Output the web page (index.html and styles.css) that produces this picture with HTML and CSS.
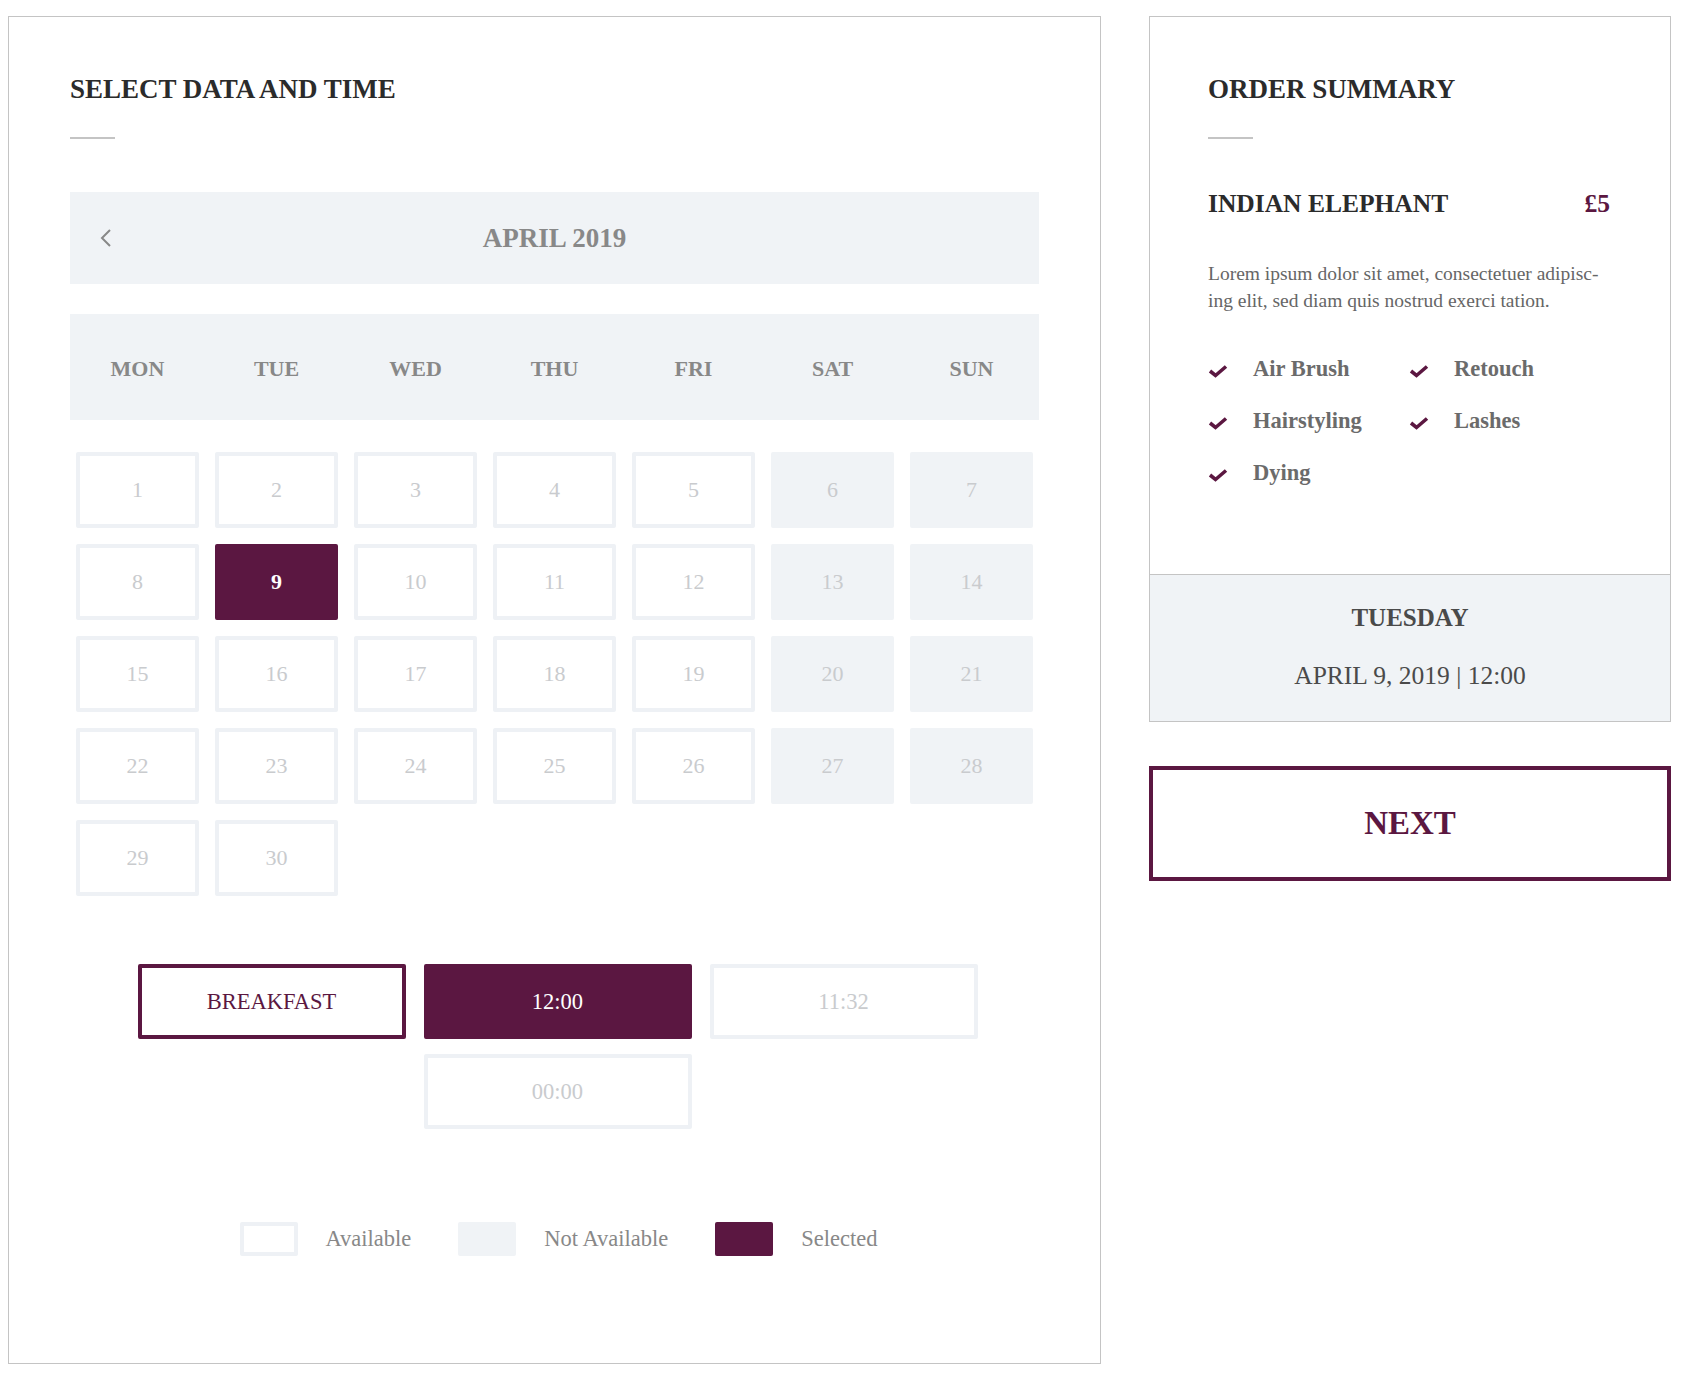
FILE: index.html
```html
<!doctype html>
<html lang="en">
<head>
<meta charset="utf-8">
<meta name="viewport" content="width=device-width, initial-scale=1">
<title>Select data and time</title>
<link rel="stylesheet" href="styles.css">
</head>
<body>

<div class="page">

	<section class="booking">

		<h2 class="title">SELECT DATA AND TIME</h2>
		<div class="rule"></div>

		<div class="month">
			<svg class="prev" viewBox="0 0 12 20"><polyline points="10,2 2,10 10,18" /></svg>
			<span>APRIL 2019</span>
		</div>

		<div class="weekdays">
			<span>MON</span><span>TUE</span><span>WED</span><span>THU</span><span>FRI</span><span>SAT</span><span>SUN</span>
		</div>

		<div class="days">
			<span class="day">1</span><span class="day">2</span><span class="day">3</span><span class="day">4</span><span class="day">5</span><span class="day off">6</span><span class="day off">7</span>
			<span class="day">8</span><span class="day on">9</span><span class="day">10</span><span class="day">11</span><span class="day">12</span><span class="day off">13</span><span class="day off">14</span>
			<span class="day">15</span><span class="day">16</span><span class="day">17</span><span class="day">18</span><span class="day">19</span><span class="day off">20</span><span class="day off">21</span>
			<span class="day">22</span><span class="day">23</span><span class="day">24</span><span class="day">25</span><span class="day">26</span><span class="day off">27</span><span class="day off">28</span>
			<span class="day">29</span><span class="day">30</span>
		</div>

		<div class="slots">
			<span class="slot meal">BREAKFAST</span>
			<span class="slot on">12:00</span>
			<span class="slot">11:32</span>
			<span class="slot">00:00</span>
		</div>

		<div class="legend">
			<span class="key"><i class="swatch free"></i>Available</span>
			<span class="key"><i class="swatch busy"></i>Not Available</span>
			<span class="key"><i class="swatch picked"></i>Selected</span>
		</div>

	</section>

	<aside class="side">

		<div class="summary">

			<div class="summary-top">

				<h2 class="title">ORDER SUMMARY</h2>
				<div class="rule"></div>

				<div class="item">
					<span>INDIAN ELEPHANT</span>
					<span class="price">£5</span>
				</div>

				<p class="desc">Lorem ipsum dolor sit amet, consectetuer adipisc-<br>ing elit, sed diam quis nostrud exerci tation.</p>

				<ul class="features">
					<li><svg class="tick" viewBox="0 0 20 14"><path d="M2 7 L7.5 11.5 L18 2.5" /></svg>Air Brush</li>
					<li><svg class="tick" viewBox="0 0 20 14"><path d="M2 7 L7.5 11.5 L18 2.5" /></svg>Retouch</li>
					<li><svg class="tick" viewBox="0 0 20 14"><path d="M2 7 L7.5 11.5 L18 2.5" /></svg>Hairstyling</li>
					<li><svg class="tick" viewBox="0 0 20 14"><path d="M2 7 L7.5 11.5 L18 2.5" /></svg>Lashes</li>
					<li><svg class="tick" viewBox="0 0 20 14"><path d="M2 7 L7.5 11.5 L18 2.5" /></svg>Dying</li>
				</ul>

			</div>

			<div class="summary-date">
				<div class="weekday">TUESDAY</div>
				<div class="when">APRIL 9, 2019 | 12:00</div>
			</div>

		</div>

		<button class="next">NEXT</button>

	</aside>

</div>

</body>
</html>
```

FILE: styles.css
```css
body { margin: 0; font-family: "Liberation Serif", "Times New Roman", serif; color: #2b2b2b; background: #fff; }

.page { display: flex; align-items: flex-start; gap: 48px; padding: 16px 0 0 8px; }

.title { margin: 0; font-size: 27px; line-height: 26px; font-weight: bold; color: #2b2b2b; }
.rule { width: 45px; height: 2px; margin-top: 35px; background: #c4c4c4; }

/* calendar side */
.booking { width: 1093px; box-sizing: border-box; border: 1px solid #c4c4c4; padding: 59px 61px 107px; }

.month { display: grid; grid-template-columns: 1fr auto 1fr; align-items: center; height: 92px; margin-top: 53px; background: #f0f3f6; }
.month span { font-size: 27px; font-weight: bold; color: #888; }
.prev { width: 12px; height: 20px; margin-left: 30px; fill: none; stroke: #888; stroke-width: 2; }

.weekdays, .days { display: grid; grid-template-columns: repeat(7, 1fr); column-gap: 16px; padding: 0 6px; }
.weekdays { align-items: center; height: 106px; box-sizing: border-box; padding-top: 4px; margin-top: 30px; background: #f0f3f6; text-align: center; font-size: 22px; font-weight: bold; color: #888; }
.days { row-gap: 16px; margin-top: 32px; }

.day { display: flex; align-items: center; justify-content: center; height: 76px; box-sizing: border-box; border: 4px solid #eef1f5; border-radius: 2px; font-size: 22px; color: #c9cbce; }
.day.off { background: #f0f3f6; border-color: #f0f3f6; }
.day.on { background: #5b1741; border-color: #5b1741; color: #fff; font-weight: bold; }

.slots { display: flex; flex-wrap: wrap; justify-content: center; gap: 15px 18px; margin-top: 68px; padding-left: 6px; }
.slot { display: flex; align-items: center; justify-content: center; width: 268px; height: 75px; box-sizing: border-box; border: 4px solid #eef1f5; border-radius: 2px; font-size: 22.5px; color: #c9cbce; }
.slot.meal { border-color: #5b1741; color: #5b1741; }
.slot.on { background: #5b1741; border-color: #5b1741; color: #fff; }

.legend { display: flex; justify-content: center; align-items: center; gap: 47px; margin-top: 93px; padding-left: 8px; font-size: 22.5px; color: #888; }
.key { display: flex; align-items: center; gap: 28px; }
.swatch { display: block; width: 58px; height: 34px; box-sizing: border-box; border-radius: 2px; }
.swatch.free { border: 4px solid #eef1f5; }
.swatch.busy { background: #f0f3f6; }
.swatch.picked { background: #5b1741; }

/* summary side */
.side { width: 522px; }
.summary { border: 1px solid #c4c4c4; }
.summary-top { padding: 59px 60px 86px 58px; }

.item { display: flex; justify-content: space-between; margin-top: 52px; font-size: 25.5px; line-height: 25px; font-weight: bold; }
.price { color: #5b1741; }

.desc { margin: 44px 0 0; font-size: 19.5px; line-height: 27px; color: #666; }

.features { display: grid; grid-template-columns: 201px auto; row-gap: 22px; margin: 40px 0 0; padding: 0; list-style: none; font-size: 22.5px; line-height: 30px; font-weight: bold; color: #6b6b6b; }
.features li { display: flex; align-items: center; gap: 25px; }
.tick { width: 20px; height: 14px; margin-top: 4px; fill: none; stroke: #5b1741; stroke-width: 3.6; }

.summary-date { padding: 31px 0 33px; border-top: 1px solid #c4c4c4; background: #f0f3f6; text-align: center; color: #4a4a4a; }
.weekday { font-size: 25px; line-height: 24px; font-weight: bold; }
.when { margin-top: 33px; font-size: 25.5px; line-height: 25px; }

.next { display: block; width: 100%; height: 115px; margin-top: 44px; border: 4px solid #5b1741; background: #fff; color: #5b1741; font: bold 33px "Liberation Serif", "Times New Roman", serif; cursor: pointer; }
```
